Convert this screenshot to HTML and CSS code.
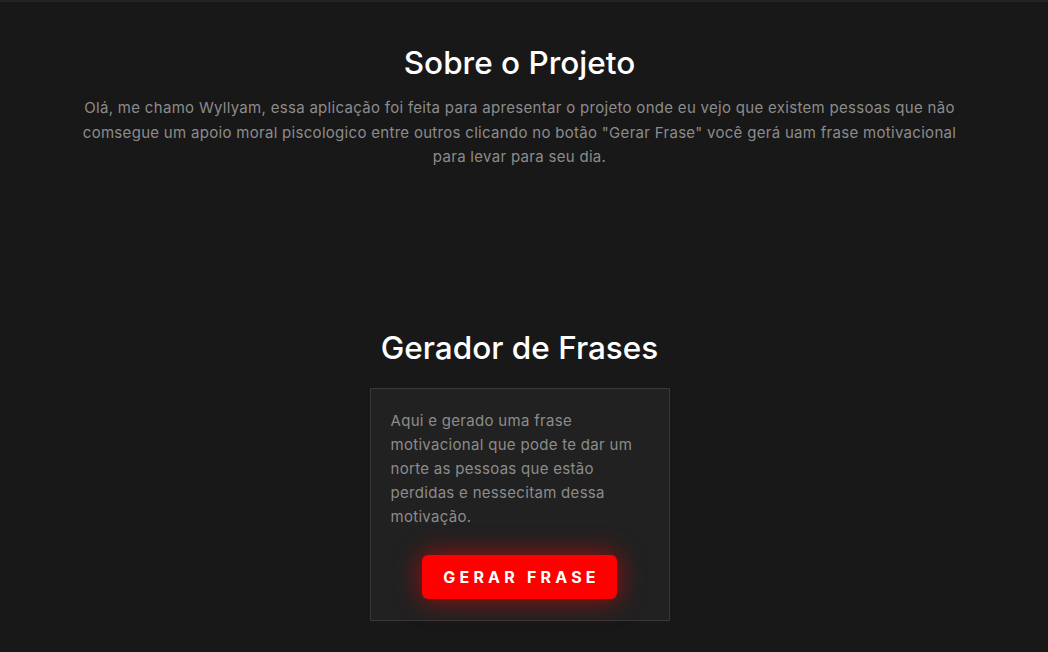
FILE: index.html
```html
<!DOCTYPE html>
<html lang="pt-BR">
<head>
<meta charset="utf-8">
<title>Gerador de Frases</title>
<link rel="stylesheet" href="styles.css">
</head>
<body>
<div class="topbar"></div>
<main class="page">
  <section class="about">
    <h2 class="title">Sobre o Projeto</h2>
    <p class="about-text">Olá, me chamo Wyllyam, essa aplicação foi feita para apresentar o projeto onde eu vejo que existem pessoas que não comsegue um apoio moral piscologico entre outros clicando no botão "Gerar Frase" você gerá uam frase motivacional para levar para seu dia.</p>
  </section>
  <section class="generator">
    <h2 class="title">Gerador de Frases</h2>
    <div class="card">
      <p class="card-text">Aqui e gerado uma frase motivacional que pode te dar um norte as pessoas que estão perdidas e nessecitam dessa motivação.</p>
      <button class="btn" type="button">Gerar Frase</button>
    </div>
  </section>
</main>
</body>
</html>
```
FILE: styles.css
```css
* { box-sizing: border-box; }
html, body { margin: 0; padding: 0; }
body {
  background: #181818;
  font-family: "Inter", "Liberation Sans", sans-serif;
  color: #fff;
  height: 652px;
  overflow: hidden;
}
.topbar {
  height: 2px;
  background: #242424;
}
.page {
  padding-right: 9px;
  display: flex;
  flex-direction: column;
  align-items: center;
}
.title {
  margin: 0;
  font-size: 31.5px;
  font-weight: 500;
  line-height: 40px;
  color: #ffffff;
  text-align: center;
}
.about {
  padding-top: 41px;
  display: flex;
  flex-direction: column;
  align-items: center;
}
.about-text {
  margin: 13px 0 0;
  width: 890px;
  font-size: 15px;
  line-height: 24.5px;
  color: #8c8c8c;
  text-align: center;
  letter-spacing: 0.3px;
}
.generator {
  margin-top: 158px;
  display: flex;
  flex-direction: column;
  align-items: center;
}
.card {
  margin-top: 20px;
  width: 300px;
  background: #212121;
  border: 1px solid #383838;
  padding: 20px 20px 21px;
  display: flex;
  flex-direction: column;
  align-items: center;
}
.card-text {
  margin: 0;
  align-self: stretch;
  font-size: 15px;
  line-height: 24px;
  color: #8c8c8c;
  letter-spacing: 0.3px;
}
.btn {
  margin-top: 26px;
  width: 195px;
  height: 44px;
  border: none;
  border-radius: 6px;
  background: #ff0000;
  color: #fff;
  font-family: inherit;
  font-size: 16px;
  font-weight: 700;
  letter-spacing: 4.2px;
  text-transform: uppercase;
  box-shadow: 0 0 26px rgba(255, 0, 0, 0.6);
  cursor: pointer;
  padding: 0 0 0 4px;
}
```
